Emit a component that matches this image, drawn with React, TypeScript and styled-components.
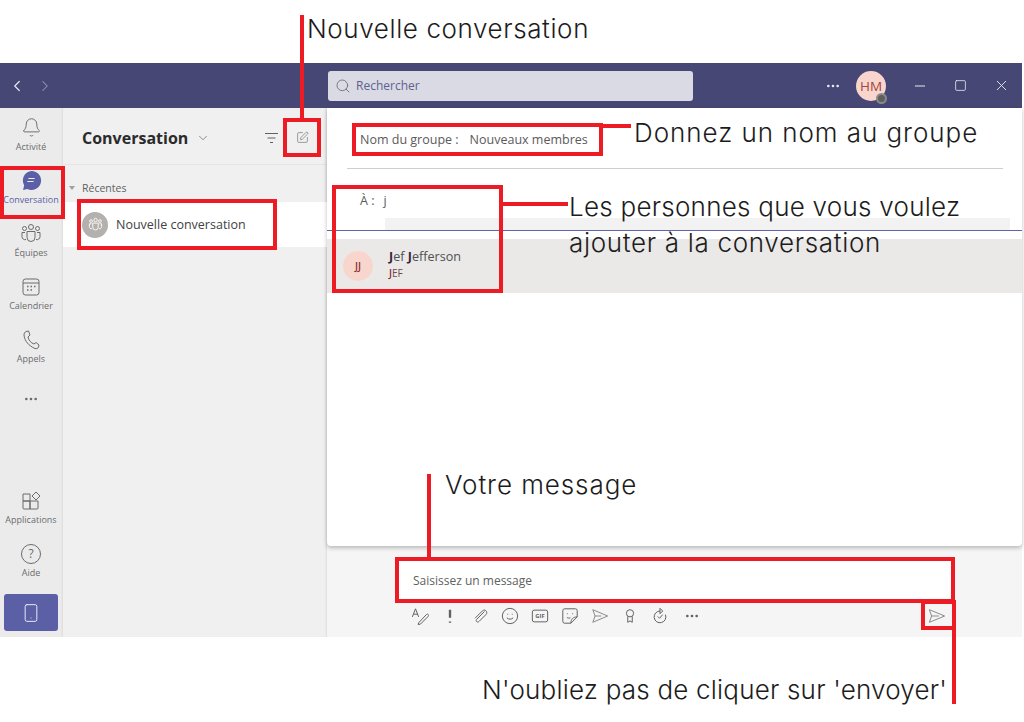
import React from 'react'
import styled, { createGlobalStyle } from 'styled-components'
import { Bell, ChevronDown, ChevronLeft, ChevronRight, Ellipsis, Minus, Search, Smartphone, Square, SquarePen, X } from 'lucide-react'

const GlobalStyle = createGlobalStyle`
  html, body {
    margin: 0;
    background: #fff;
    overflow: hidden;
  }
`

function App() {
  const toolbarIcons = [
    <g key="a"><path d="M1.500 11 5 2l3.500 9M2.800 8h4.500" /><path d="M8.500 17.500 17 8.500c1.500-1.500 3.500.5 2 2l-8.500 8.500-2.500.5z" /></g>,
    <path key="b" d="M10 3v9M10 16v1.500" strokeWidth="2.600" />,
    <path key="c" d="M15 5 6.500 13.500c-2 2 .5 4.500 2.500 2.500l7.500-7.500c3-3-1-7-4-4L4.500 12.500" />,
    <g key="d"><circle cx="10" cy="10" r="8.500" /><path d="M6.500 12c1.800 2 5.200 2 7 0M7.500 7.500v1M12.500 7.500v1" /></g>,
    <g key="e"><rect x="1.500" y="3.500" width="17" height="13" rx="2" /><GifText x="10" y="12.300">GIF</GifText></g>,
    <path key="f" d="M11 18H4a2 2 0 0 1-2-2V4a2 2 0 0 1 2-2h12a2 2 0 0 1 2 2v7zM11 18c0-4.500 2.500-7 7-7M7 7v1M13 7v1M6.500 11.500c1 1 3 1 4 .5" />,
    <path key="g" stroke="#8a8a8a" d="M2 3 18.500 10 2 17 4.500 10zM4.500 10h7" />,
    <g key="h"><circle cx="10" cy="7" r="4" /><path d="M7.500 10.500V17l2.500-1.500 2.500 1.500v-6.500" /></g>,
    <path key="i" d="M10 4.500a6.500 6.500 0 1 0 6 4M10 1.500v6l3-3zM7.500 10.500l2 2 3.500-4" />,
  ]

  return (
    <Page>
      <GlobalStyle />
      <Window>
        <TitleBar>
          <NavArrows>
            <ChevronLeft size={18} strokeWidth={1.6} />
            <DimArrow><ChevronRight size={18} strokeWidth={1.4} /></DimArrow>
          </NavArrows>
          <SearchBox>
            <Search size={16} strokeWidth={1.3} color="#6b6b70" />
            <span>Rechercher</span>
          </SearchBox>
          <WindowControls>
            <Ellipsis size={16} strokeWidth={2} />
            <UserAvatar>
              HM
              <StatusDot />
            </UserAvatar>
            <Minus size={16} strokeWidth={1.5} />
            <Square size={13} strokeWidth={1.5} />
            <X size={17} strokeWidth={1.3} />
          </WindowControls>
        </TitleBar>

        <Body>
          <Rail>
            <RailItem>
              <Bell size={21} strokeWidth={1.1} />
              <RailLabel>Activité</RailLabel>
            </RailItem>
            <RailItem $active>
              <svg width="21" height="21" viewBox="0 0 20 20">
                <path d="M10 1a9 9 0 1 1-4 17l-4 1 1-4.500A9 9 0 0 1 10 1z" fill="#5b5fa6" />
                <path d="M7 8h6M6 11h6" stroke="#ebebeb" strokeWidth="1" />
              </svg>
              <RailLabel>Conversation</RailLabel>
            </RailItem>
            <RailItem>
              <svg width="22" height="21" viewBox="0 0 22 20" fill="none" stroke="currentColor" strokeWidth="1">
                <circle cx="11" cy="3.500" r="2.500" />
                <circle cx="4.500" cy="5" r="2" />
                <circle cx="17.500" cy="5" r="2" />
                <path d="M7 8h8v6a4 4 0 0 1-8 0zM5 9H2v4a3 3 0 0 0 4 3M17 9h3v4a3 3 0 0 1-4 3" />
              </svg>
              <RailLabel>Équipes</RailLabel>
            </RailItem>
            <RailItem>
              <svg width="20" height="20" viewBox="0 0 20 20" fill="none" stroke="currentColor" strokeWidth="1">
                <rect x="2" y="2" width="16" height="16" rx="2.500" />
                <path d="M2 6h16" />
                <path d="M6 9.500h1.500M9.500 9.500H11M13 9.500h1.500M6 13h1.500M9.500 13H11" strokeWidth="1.500" />
              </svg>
              <RailLabel>Calendrier</RailLabel>
            </RailItem>
            <RailItem>
              <svg width="20" height="20" viewBox="0 0 20 20" fill="none" stroke="currentColor" strokeWidth="1">
                <path d="M5 1.500 7.500 1l1.500 4-2 2c.5 3 3 6 6 7l2-1.500 3 2.500-.5 2c-.5 1.500-2 2-3.500 1.500C8 16 3.500 11 3 5c0-1.500.8-3 2-3.500z" />
              </svg>
              <RailLabel>Appels</RailLabel>
            </RailItem>
            <MoreDots><Ellipsis size={16} strokeWidth={2} /></MoreDots>
            <RailSpacer />
            <RailItem>
              <svg width="20" height="20" viewBox="0 0 20 20" fill="none" stroke="currentColor" strokeWidth="1">
                <path d="M2 3h7v7H2zM2 10h7v8H3a1 1 0 0 1-1-1zM9 10h8v7a1 1 0 0 1-1 1H9zM15 1l4 4-4 4-4-4z" />
              </svg>
              <RailLabel>Applications</RailLabel>
            </RailItem>
            <RailItem>
              <HelpRing>?</HelpRing>
              <RailLabel>Aide</RailLabel>
            </RailItem>
            <MobileButton>
              <Smartphone size={20} strokeWidth={1.2} />
            </MobileButton>
          </Rail>

          <ListPane>
            <ListHeader>
              <ListTitle>Conversation</ListTitle>
              <ChevronDown size={14} strokeWidth={1.2} color="#616161" />
              <HeaderActions>
                <svg width="15" height="12" viewBox="0 0 15 12" fill="none" stroke="#616161" strokeWidth="1">
                  <path d="M1 1.500h13M3.500 6h8M6 10.500h3" />
                </svg>
                <SquarePen size={13} strokeWidth={1.1} color="#616161" />
              </HeaderActions>
            </ListHeader>
            <SectionLabel><Caret />Récentes</SectionLabel>
            <ChatRow>
              <GroupAvatar>
                <svg width="15" height="15" viewBox="0 0 22 20" fill="none" stroke="#fff" strokeWidth="1.300">
                  <circle cx="11" cy="3.500" r="2.500" />
                  <circle cx="4.500" cy="5" r="2" />
                  <circle cx="17.500" cy="5" r="2" />
                  <path d="M7 8h8v6a4 4 0 0 1-8 0zM5 9H2v4a3 3 0 0 0 4 3M17 9h3v4a3 3 0 0 1-4 3" />
                </svg>
              </GroupAvatar>
              Nouvelle conversation
            </ChatRow>
          </ListPane>

          <MainPane>
            <Card>
              <GroupNameRow>
                <span>Nom du groupe :</span>
                <span>Nouveaux membres</span>
              </GroupNameRow>
              <ToRow>
                <span>À :</span>
                <span>j</span>
              </ToRow>
              <ToBand />
              <ResultRow>
                <ResultAvatar>JJ</ResultAvatar>
                <ResultText>
                  <ResultName><b>J</b>ef <b>J</b>efferson</ResultName>
                  <ResultHandle><b>J</b>EF</ResultHandle>
                </ResultText>
              </ResultRow>
            </Card>
            <Composer>
              <MessageInput>Saisissez un message</MessageInput>
              <Toolbar>
                {toolbarIcons.map((icon) => (
                  <ToolIcon key={icon.key} viewBox="0 0 20 20">{icon}</ToolIcon>
                ))}
                <MoreTools><Ellipsis size={16} strokeWidth={2} color="#616161" /></MoreTools>
                <SendIcon viewBox="0 0 20 20">
                  <path d="M1.500 3 18.500 10 1.500 17 4 10zM4 10h8" />
                </SendIcon>
              </Toolbar>
            </Composer>
          </MainPane>
        </Body>
      </Window>

      <RedBox $x={283} $y={118} $w={38} $h={39} />
      <RedBox $x={0} $y={166} $w={65} $h={53} />
      <RedBox $x={77} $y={199} $w={200} $h={51} />
      <RedBox $x={352} $y={123} $w={251} $h={33} />
      <RedBox $x={332} $y={185} $w={171} $h={108} />
      <RedBox $x={395} $y={557} $w={560} $h={46} />
      <RedBox $x={921} $y={600} $w={35} $h={30} />
      <RedLine $x={300} $y={15} $w={4} $h={104} />
      <RedLine $x={603} $y={124} $w={28} $h={4} />
      <RedLine $x={503} $y={202} $w={65} $h={4} />
      <RedLine $x={427} $y={474} $w={4} $h={84} />
      <RedLine $x={952} $y={630} $w={4} $h={74} />

      <Note $x={307} $y={12} $track={0.6}>Nouvelle conversation</Note>
      <Note $x={634} $y={116} $track={0.95}>Donnez un nom au groupe</Note>
      <Note $x={569} $y={190} $track={0.25}>Les personnes que vous voulez</Note>
      <Note $x={569} $y={226} $track={0.68}>ajouter à la conversation</Note>
      <Note $x={445} $y={468} $track={0.92}>Votre message</Note>
      <Note $x={482} $y={673} $track={0.2}>N'oubliez pas de cliquer sur 'envoyer'</Note>
    </Page>
  )
}

export default App

const Page = styled.div`
  position: relative;
  width: 1024px;
  height: 722px;
  padding-top: 63px;
  box-sizing: border-box;
  background: #fff;
  font-family: 'Open Sans', 'Liberation Sans', sans-serif;
  overflow: hidden;
`

const Window = styled.div`
  display: flex;
  flex-direction: column;
  width: 1022px;
  height: 574px;
`

const TitleBar = styled.header`
  display: flex;
  align-items: center;
  flex: 0 0 45px;
  background: #464775;
  color: #e8e8ef;
`

const NavArrows = styled.div`
  display: flex;
  align-items: center;
  gap: 10px;
  width: 328px;
  padding-left: 8px;
  box-sizing: border-box;
`

const DimArrow = styled.span`
  display: flex;
  opacity: 0.5;
`

const SearchBox = styled.div`
  display: flex;
  align-items: center;
  gap: 5px;
  width: 365px;
  height: 30px;
  padding-left: 7px;
  box-sizing: border-box;
  background: #d9dae4;
  border-radius: 3px;
  color: #5f6190;
  font-size: 12px;
`

const WindowControls = styled.div`
  display: flex;
  align-items: center;
  margin-left: auto;
  gap: 26px;
  padding-right: 12px;

  & > svg:first-child {
    margin-right: -11px;
  }
`

const UserAvatar = styled.div`
  position: relative;
  display: flex;
  align-items: center;
  justify-content: center;
  width: 30px;
  height: 30px;
  border-radius: 50%;
  background: #f8d6ce;
  color: #a4473d;
  font-size: 13.5px;
`

const StatusDot = styled.span`
  position: absolute;
  right: -1px;
  bottom: -3px;
  width: 7px;
  height: 7px;
  border-radius: 50%;
  border: 2px solid #8a8a8a;
  background: #5f5f5f;
`

const Body = styled.div`
  display: flex;
  flex: 1;
  min-height: 0;
`

const Rail = styled.nav`
  display: flex;
  flex-direction: column;
  align-items: center;
  flex: 0 0 63px;
  padding: 0 1px 6px 0;
  box-sizing: border-box;
  background: #ebebeb;
  box-shadow: inset -2px 0 2px -1px #dcdcdc;
  color: #6b6b6b;
`

const RailItem = styled.div<{ $active?: boolean }>`
  display: flex;
  flex-direction: column;
  align-items: center;
  justify-content: center;
  flex: 0 0 53px;
  gap: 3px;
  width: 100%;
  color: ${({ $active }) => ($active ? '#5b5fa6' : '#6b6b6b')};
`

const RailLabel = styled.span`
  font-size: 9px;
  line-height: 11px;
  white-space: nowrap;
`

const MoreDots = styled.div`
  display: flex;
  justify-content: center;
  margin-top: 18px;
`

const RailSpacer = styled.div`
  flex: 1;
`

const HelpRing = styled.span`
  display: flex;
  align-items: center;
  justify-content: center;
  width: 18px;
  height: 18px;
  border: 1px solid #6b6b6b;
  border-radius: 50%;
  font-size: 12px;
`

const MobileButton = styled.div`
  display: flex;
  align-items: center;
  justify-content: center;
  width: 54px;
  flex: 0 0 37px;
  margin-top: 7px;
  background: #5b5fa6;
  border-radius: 3px;
  color: #e8e8f2;
`

const ListPane = styled.aside`
  flex: 0 0 264px;
  background: #f0f0f0;
  box-shadow: inset -2px 0 2px -1px #dedede;
`

const ListHeader = styled.div`
  display: flex;
  align-items: center;
  gap: 8px;
  height: 57px;
  padding: 3px 0 0 19px;
  box-sizing: border-box;
  border-bottom: 1px solid #e4e4e4;
`

const ListTitle = styled.h2`
  margin: 0;
  color: #2b2b2b;
  font-size: 16px;
  font-weight: 700;
`

const HeaderActions = styled.div`
  display: flex;
  align-items: center;
  gap: 17px;
  margin-left: auto;
  padding-right: 18px;
`

const SectionLabel = styled.div`
  display: flex;
  align-items: center;
  height: 37px;
  padding: 8px 0 0 6px;
  box-sizing: border-box;
  color: #616161;
  font-size: 10.5px;
`

const Caret = styled.span`
  width: 0;
  height: 0;
  margin-right: 7px;
  border-left: 3px solid transparent;
  border-right: 3px solid transparent;
  border-top: 4px solid #a0a0a0;
`

const ChatRow = styled.div`
  display: flex;
  align-items: center;
  gap: 8px;
  height: 45px;
  padding-left: 19px;
  background: #fff;
  color: #424242;
  font-size: 12.5px;
`

const GroupAvatar = styled.span`
  display: flex;
  align-items: center;
  justify-content: center;
  width: 26px;
  height: 26px;
  border-radius: 50%;
  background: #b3b0ad;
`

const MainPane = styled.main`
  display: flex;
  flex-direction: column;
  flex: 1;
  min-width: 0;
  background: #f5f5f5;
`

const Card = styled.section`
  flex: 0 0 438px;
  background: #fff;
  border-radius: 0 0 4px 4px;
  box-shadow: 0 2px 4px rgba(0, 0, 0, 0.25);
`

const GroupNameRow = styled.div`
  display: flex;
  gap: 11px;
  align-items: center;
  height: 61px;
  margin: 0 19px 0 20px;
  padding: 2px 0 0 13px;
  box-sizing: border-box;
  border-bottom: 1px solid #cfcfcf;
  color: #5a5a5a;
  font-size: 12.5px;
`

const ToRow = styled.div`
  display: flex;
  gap: 9px;
  align-items: center;
  height: 49px;
  padding: 14px 0 0 33px;
  box-sizing: border-box;
  color: #5a5a5a;
  font-size: 12.5px;
`

const ToBand = styled.div`
  height: 12px;
  background: linear-gradient(to right, transparent 58px, #f2f2f2 58px, #f2f2f2 683px, transparent 683px);
  border-bottom: 1px solid #6264a7;
`

const ResultRow = styled.div`
  display: flex;
  align-items: center;
  gap: 16px;
  height: 54px;
  margin-top: 8px;
  padding-left: 16px;
  background: #eae9e8;
`

const ResultAvatar = styled.span`
  display: flex;
  align-items: center;
  justify-content: center;
  width: 30px;
  height: 30px;
  border-radius: 50%;
  background: #f8d6ce;
  color: #8a2c2c;
  font-size: 10px;
  font-weight: 600;
`

const ResultText = styled.div`
  display: flex;
  flex-direction: column;
  gap: 3px;
  padding-bottom: 3px;
`

const ResultName = styled.span`
  color: #505050;
  font-size: 12.600px;
  line-height: 15px;

  & > b {
    color: #3c1f3a;
  }
`

const ResultHandle = styled.span`
  color: #6a4a4a;
  font-size: 10px;
  line-height: 13px;

  & > b {
    color: #8a2c2c;
    font-weight: 600;
  }
`

const Composer = styled.div`
  flex: 1;
  padding: 14px 69px 0 70px;
`

const MessageInput = styled.div`
  display: flex;
  align-items: center;
  height: 41px;
  padding-left: 16px;
  background: #fff;
  color: #616161;
  font-size: 12px;
`

const Toolbar = styled.div`
  display: flex;
  align-items: center;
  gap: 12px;
  height: 30px;
  padding: 0 0 0 14px;
`

const ToolIcon = styled.svg`
  width: 18px;
  height: 18px;
  fill: none;
  stroke: #616161;
  stroke-width: 1.100;
`

const GifText = styled.text`
  fill: #616161;
  stroke: none;
  font-family: 'Open Sans', sans-serif;
  font-size: 6.500px;
  font-weight: 700;
  text-anchor: middle;
`

const MoreTools = styled.span`
  display: flex;
  margin-left: 3px;
`

const SendIcon = styled.svg`
  width: 18px;
  height: 18px;
  margin-left: auto;
  margin-right: 7px;
  fill: none;
  stroke: #8a8a8a;
  stroke-width: 1.100;
`

const RedBox = styled.div<{ $x: number; $y: number; $w: number; $h: number }>`
  position: absolute;
  left: ${({ $x }) => $x}px;
  top: ${({ $y }) => $y}px;
  width: ${({ $w }) => $w}px;
  height: ${({ $h }) => $h}px;
  box-sizing: border-box;
  border: 4px solid #ed1c24;
`

const RedLine = styled.div<{ $x: number; $y: number; $w: number; $h: number }>`
  position: absolute;
  left: ${({ $x }) => $x}px;
  top: ${({ $y }) => $y}px;
  width: ${({ $w }) => $w}px;
  height: ${({ $h }) => $h}px;
  background: #ed1c24;
`

const Note = styled.div<{ $x: number; $y: number; $track: number }>`
  position: absolute;
  left: ${({ $x }) => $x}px;
  top: ${({ $y }) => $y}px;
  color: #1c1c1c;
  font-family: Inter, 'Liberation Sans', sans-serif;
  font-size: 26px;
  font-weight: 300;
  letter-spacing: ${({ $track }) => $track}px;
  line-height: 34px;
  white-space: nowrap;
`
